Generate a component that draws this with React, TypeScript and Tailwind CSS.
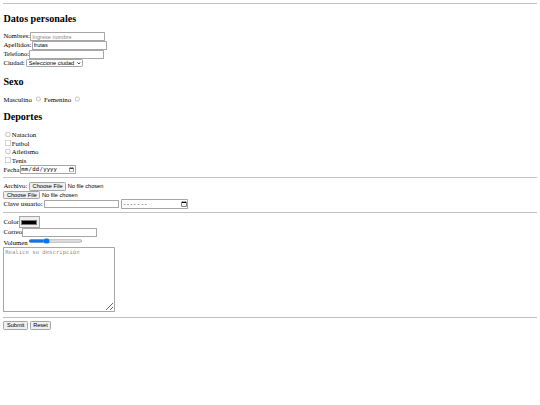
import React from "react";

const txt =
  "inline-block align-baseline w-[178px] h-[21px] px-[3px] py-[2px] border border-[#a6a6a6] rounded-[2px] bg-white text-black font-['Liberation_Sans',Arial,sans-serif] text-[13.333px] leading-[normal] placeholder:text-[#8a8a8a] outline-none";
const btn =
  "inline-block align-baseline px-[6px] py-[1px] border border-[#a6a6a6] rounded-[3px] bg-[#efefef] text-black font-['Liberation_Sans',Arial,sans-serif] text-[13.333px] leading-[normal]";
const file =
  "inline-block align-baseline font-['Liberation_Sans',Arial,sans-serif] text-[13.333px] leading-[normal] text-black file:mr-[4px] file:px-[6px] file:py-[1px] file:border file:border-[#a6a6a6] file:rounded-[3px] file:bg-[#efefef] file:text-black file:font-['Liberation_Sans',Arial,sans-serif] file:text-[13.333px]";
const native = "[all:revert] [border-color:#a6a6a6]!";
const raw = "[all:revert]";
const h2 = "text-[24px] font-bold my-[19.92px]";

const deportes = ["Natacion", "Futbol", "Atletismo", "Tenis"];

export default function App() {
  return (
    <div
      lang="en-US"
      className="[zoom:0.421875] w-[1280px] min-h-[960px] px-2 pb-2 bg-white text-black font-['Liberation_Serif',serif] text-[16px] leading-[normal]"
    >
      <form onSubmit={(e) => e.preventDefault()}>
        <hr className="my-2 border-[#c2c2c2]" />
        <h2 className={h2}>Datos personales</h2>
        Nombres:<input className={txt} type="text" placeholder="Ingrese nombre" />
        <br />
        Apellidos:<input className={txt} type="text" defaultValue="frutas" />
        <br />
        Telefono:<input className={txt} type="tel" />
        <br />
        Ciudad:{" "}
        <span className="relative inline-block align-baseline">
          <select
            defaultValue=""
            className="appearance-none inline-block align-baseline w-[134px] h-[20px] pl-[3px] pr-[14px] border border-[#a6a6a6] rounded-[3px] bg-white text-black font-['Liberation_Sans',Arial,sans-serif] text-[13.333px] leading-[normal] outline-none"
          >
            <option value="">Seleccione ciudad</option>
            <option value="quito">Quito</option>
          </select>
          <svg
            className="absolute right-[4px] top-[7px] w-[9px] h-[6px] pointer-events-none"
            viewBox="0 0 9 6"
          >
            <path d="M1 1 L4.5 4.5 L8 1" fill="none" stroke="#111" strokeWidth="2" />
          </svg>
        </span>
        <h2 className={h2}>Sexo</h2>
        Masculino <input className={raw} type="radio" name="sexo" /> Femenino{" "}
        <input className={raw} type="radio" name="sexo" />
        <h2 className={h2}>Deportes</h2>
        {deportes.map((d) => (
          <div key={d} className="h-[20px]">
            <input className={raw} type="checkbox" />
            {d}
          </div>
        ))}
        <div className="mt-[1px]">
          Fecha
          <input
            className={`${native} [border-style:solid]! [border-width:1px]! rounded-[2px]!`}
            type="date"
          />
        </div>
        <hr className="my-2 border-[#c2c2c2]" />
        Archivo: <input className={file} type="file" />
        <br />
        <input className={file} type="file" />
        <br />
        Clave usuario: <input className={txt} type="password" />{" "}
        <input
          className={`${native} [border-style:solid]! [border-width:1px]! rounded-[2px]! w-[154px]!`}
          type="month"
        />
        <hr className="my-2 border-[#c2c2c2]" />
        Color<input className={native} type="color" defaultValue="#000000" />
        <br />
        Correo<input className={txt} type="email" />
        <br />
        Volumen<input className={raw} type="range" defaultValue={30} />
        <br />
        <textarea
          className={`${native} [border-style:solid]! [border-width:1px]! rounded-[2px]! [width:257px]! [height:146px]! mt-[4px]!`}
          cols={30}
          rows={10}
          placeholder="Realice su descripción"
        />
        <hr className="my-2 border-[#c2c2c2]" />
        <input className={btn} type="submit" value="Submit" />{" "}
        <input className={btn} type="reset" value="Reset" />
      </form>
    </div>
  );
}
